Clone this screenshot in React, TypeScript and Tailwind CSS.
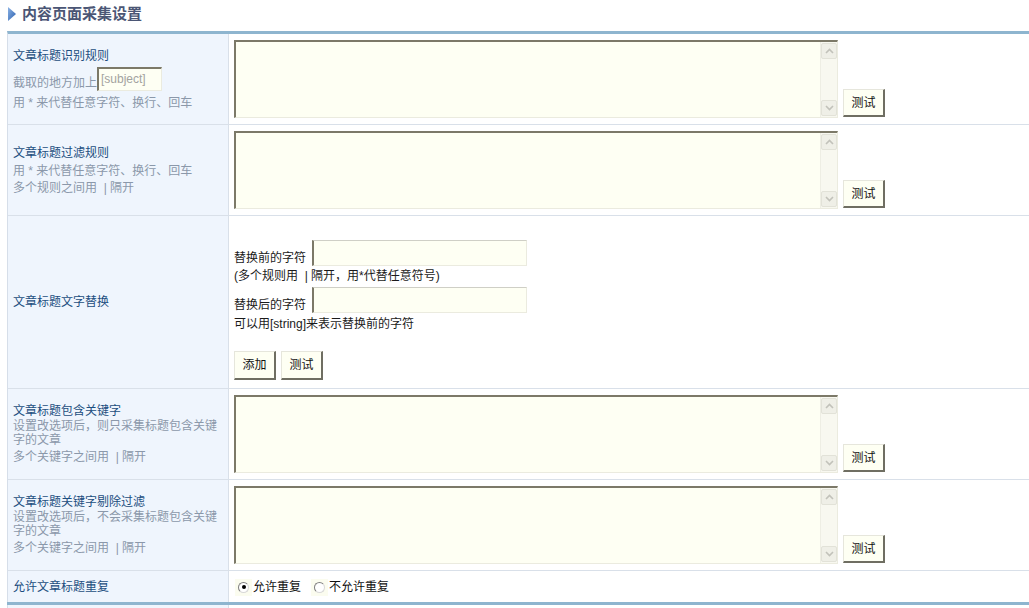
import React from "react";

const FONT = { fontFamily: '"Liberation Sans", "Noto Sans CJK SC", sans-serif' };

function Chevron({ up }: { up?: boolean }) {
  return (
    <svg width="9" height="6" viewBox="0 0 9 6">
      <path
        d={up ? "M1 5 L4.5 1.5 L8 5" : "M1 1 L4.5 4.5 L8 1"}
        fill="none"
        stroke="#c2c2ba"
        strokeWidth="1.6"
      />
    </svg>
  );
}

function FakeTextarea() {
  return (
    <div className="flex w-[604px] h-[78px] border-t-2 border-l-2 border-t-[#7c7968] border-l-[#7c7968] border-b border-r border-b-[#ebebdf] border-r-[#ebebdf] bg-[#fefff3]">
      <textarea className="flex-1 resize-none bg-transparent outline-none text-[12px] p-[2px]" />
      <div className="w-[17px] h-full bg-[#f8f8f0] border-l border-[#eeeee4] flex flex-col justify-between py-[1px]">
        <div className="w-[16px] h-[16px] bg-[#efefe7] border border-[#e2e2d8] rounded-[2px] flex items-center justify-center">
          <Chevron up />
        </div>
        <div className="w-[16px] h-[16px] bg-[#efefe7] border border-[#e2e2d8] rounded-[2px] flex items-center justify-center">
          <Chevron />
        </div>
      </div>
    </div>
  );
}

function Btn({ label, h = "h-[28px]" }: { label: string; h?: string }) {
  return (
    <button className={`w-[42px] ${h} bg-[#fefff3] text-[12px] text-[#111] border-t border-l border-t-[#e6e6dc] border-l-[#e6e6dc] border-r-2 border-b-2 border-r-[#6f6e62] border-b-[#6f6e62] flex items-center justify-center leading-none`}>
      {label}
    </button>
  );
}

function TextareaCell() {
  return (
    <div className="flex-1 pl-[5px] pt-[6px] flex items-start">
      <FakeTextarea />
      <div className="ml-[5px] self-start mt-[49px]">
        <Btn label="测试" />
      </div>
    </div>
  );
}

const leftCell =
  "w-[221px] shrink-0 bg-[#eff5fd] border-r border-[#d9e0e9] pl-[5px] pr-[4px] flex flex-col justify-center";
const titleCls = "text-[#1c4e80]";
const descCls = "text-[#8b98aa]";

function Radio({ checked }: { checked?: boolean }) {
  return (
    <span className="w-[17px] h-[17px] bg-[#fbfcef] flex items-center justify-center">
      <span className="w-[11px] h-[11px] rounded-full bg-white border border-t-[#7f7f7f] border-l-[#7f7f7f] border-r-[#d8d8d8] border-b-[#d8d8d8] flex items-center justify-center">
        {checked && <span className="w-[4px] h-[4px] rounded-full bg-black" />}
      </span>
    </span>
  );
}

const inputCls =
  "ml-[6px] w-[215px] h-[26px] bg-[#fefff3] border-l-2 border-l-[#7c7968] border-t border-t-[#cfcfc6] border-r border-b border-r-[#ebebdf] border-b-[#ebebdf] outline-none";

export default function App() {
  return (
    <div className="w-[1029px] h-[608px] bg-white overflow-hidden text-[12px]" style={FONT}>
      <div className="h-[31px] flex items-start pt-[6px] pl-[8px]">
        <svg width="8" height="14" viewBox="0 0 8 14" className="mt-[1px]">
          <defs>
            <linearGradient id="tg" x1="0" y1="0" x2="1" y2="1">
              <stop offset="0" stopColor="#8db4e6" />
              <stop offset="1" stopColor="#2a5fae" />
            </linearGradient>
          </defs>
          <polygon points="0,0 8,7 0,14" fill="url(#tg)" />
        </svg>
        <h1 className="ml-[6px] text-[15px] font-bold text-[#4b5675] leading-[16px]">内容页面采集设置</h1>
      </div>

      <div className="ml-[7px] border-t-[3px] border-t-[#8eb5cf] border-l border-l-[#d6dee9]">
        {/* Row 1 */}
        <div className="flex h-[91px] border-b border-[#d9e0e9]">
          <div className={leftCell}>
            <div className={`${titleCls} leading-[16px]`}>文章标题识别规则</div>
            <div className="flex items-end mt-[3px]">
              <span className={`${descCls} leading-[16px]`}>截取的地方加上</span>
              <span className="w-[65px] h-[24px] bg-[#fefff3] border-t-2 border-l-2 border-t-[#7c7968] border-l-[#7c7968] border-b border-r border-b-[#ebebdf] border-r-[#ebebdf] text-[#a3a3a0] text-[12px] leading-[20px] pl-[2px]">
                [subject]
              </span>
            </div>
            <div className={`${descCls} leading-[16px] mt-[4px]`}>用 * 来代替任意字符、换行、回车</div>
          </div>
          <TextareaCell />
        </div>

        {/* Row 2 */}
        <div className="flex h-[91px] border-b border-[#d9e0e9]">
          <div className={leftCell}>
            <div className={`${titleCls} leading-[16px]`}>文章标题过滤规则</div>
            <div className={`${descCls} leading-[16px] mt-[2px]`}>用 * 来代替任意字符、换行、回车</div>
            <div className={`${descCls} leading-[16px] mt-[1px]`}>多个规则之间用 &nbsp;| 隔开</div>
          </div>
          <TextareaCell />
        </div>

        {/* Row 3 */}
        <div className="flex h-[173px] border-b border-[#d9e0e9]">
          <div className={leftCell}>
            <div className={`${titleCls} leading-[16px]`}>文章标题文字替换</div>
          </div>
          <div className="flex-1 pl-[5px] pt-[24px] text-[#1a1a1a]">
            <div className="flex items-end">
              <span className="leading-[16px]">替换前的字符</span>
              <input className={inputCls} />
            </div>
            <div className="leading-[20px]">(多个规则用 &nbsp;| 隔开，用*代替任意符号)</div>
            <div className="flex items-end mt-[1px]">
              <span className="leading-[16px]">替换后的字符</span>
              <input className={inputCls} />
            </div>
            <div className="leading-[22px]">可以用[string]来表示替换前的字符</div>
            <div className="flex gap-[5px] mt-[16px]">
              <Btn label="添加" h="h-[29px]" />
              <Btn label="测试" h="h-[29px]" />
            </div>
          </div>
        </div>

        {/* Row 4 */}
        <div className="flex h-[91px] border-b border-[#d9e0e9]">
          <div className={leftCell}>
            <div className={`${titleCls} leading-[15px]`}>文章标题包含关键字</div>
            <div className={`${descCls} leading-[14px]`}>设置改选项后，则只采集标题包含关键字的文章</div>
            <div className={`${descCls} leading-[14px] mt-[3px]`}>多个关键字之间用 &nbsp;| 隔开</div>
          </div>
          <TextareaCell />
        </div>

        {/* Row 5 */}
        <div className="flex h-[91px] border-b border-[#d9e0e9]">
          <div className={leftCell}>
            <div className={`${titleCls} leading-[15px]`}>文章标题关键字剔除过滤</div>
            <div className={`${descCls} leading-[14px]`}>设置改选项后，不会采集标题包含关键字的文章</div>
            <div className={`${descCls} leading-[14px] mt-[3px]`}>多个关键字之间用 &nbsp;| 隔开</div>
          </div>
          <TextareaCell />
        </div>

        {/* Row 6 */}
        <div className="flex h-[31px]">
          <div className={leftCell}>
            <div className={`${titleCls} leading-[16px]`}>允许文章标题重复</div>
          </div>
          <div className="flex-1 flex items-center pl-[6px] pt-[1px] text-[#111]">
            <Radio checked />
            <span className="ml-[1px]">允许重复</span>
            <span className="ml-[10px]">
              <Radio />
            </span>
            <span className="ml-[1px]">不允许重复</span>
          </div>
        </div>
      </div>
      <div className="ml-[7px] h-[3px] bg-[#8eb5cf]" />
      <div className="ml-[7px] flex h-[3px]">
        <div className="w-[222px] border-l border-r border-[#d6dee9] bg-[#eff5fd]" />
      </div>
    </div>
  );
}
